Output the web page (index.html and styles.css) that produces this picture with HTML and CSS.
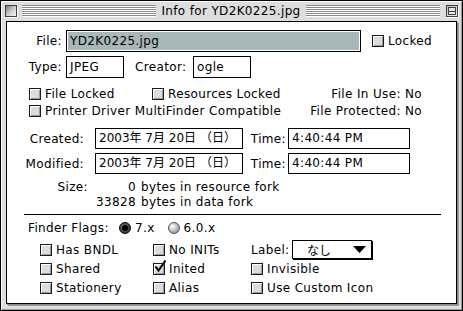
FILE: index.html
```html
<!DOCTYPE html>
<html>
<head>
<meta charset="utf-8">
<link rel="stylesheet" href="styles.css">
</head>
<body>
<div class="window">
  <div class="titlebar">
    <div class="closebox"></div>
    <div class="stripes"></div>
    <div class="title">Info for YD2K0225.jpg</div>
    <div class="stripes"></div>
    <div class="zoombox"><span class="zin"></span></div>
  </div>
  <div class="content">
    <div class="row row-file">
      <span class="lbl w-file">File:</span>
      <div class="field field-file"><span class="sel">YD2K0225.jpg</span></div>
      <span class="cb cb-locked"></span><span class="cbl">Locked</span>
    </div>
    <div class="row row-type">
      <span class="lbl w-file">Type:</span>
      <div class="field field-short">JPEG</div>
      <span class="lbl-creator">Creator:</span>
      <div class="field field-short">ogle</div>
    </div>
    <div class="row row-cb row-cb-a">
      <span class="cell cell-a"><span class="cb"></span><span class="cbl">File Locked</span></span>
      <span class="cell"><span class="cb"></span><span class="cbl">Resources Locked</span></span>
      <span class="status">File In Use: No</span>
    </div>
    <div class="row row-cb row-cb-b">
      <span class="cell"><span class="cb"></span><span class="cbl">Printer Driver MultiFinder Compatible</span></span>
      <span class="status">File Protected: No</span>
    </div>
    <div class="row row-date row-created">
      <span class="lbl w-date">Created:</span>
      <div class="field field-date">2003年 7月 20日 （日）</div>
      <span class="lbl w-time">Time:</span>
      <div class="field field-time">4:40:44 PM</div>
    </div>
    <div class="row row-date row-modified">
      <span class="lbl w-date">Modified:</span>
      <div class="field field-date">2003年 7月 20日 （日）</div>
      <span class="lbl w-time">Time:</span>
      <div class="field field-time">4:40:44 PM</div>
    </div>
    <div class="size">
      <div class="size-line">
        <span class="lbl w-size">Size:</span>
        <span class="num">0</span>
        <span class="desc">bytes in resource fork</span>
      </div>
      <div class="size-line">
        <span class="lbl w-size"></span>
        <span class="num">33828</span>
        <span class="desc">bytes in data fork</span>
      </div>
    </div>
    <div class="sep"></div>
    <div class="row row-flags">
      <span class="lbl-flags">Finder Flags:</span>
      <span class="radio on"><span class="dot"></span></span><span class="rl rl-7">7.x</span>
      <span class="radio"></span><span class="rl">6.0.x</span>
    </div>
    <div class="grid">
      <span class="cell"><span class="cb"></span><span class="cbl">Has BNDL</span></span>
      <span class="cell"><span class="cb"></span><span class="cbl">No INITs</span></span>
      <span class="cell">
        <span class="lbl-label">Label:</span>
        <span class="popup"><span class="popup-text">なし</span><svg class="tri" width="13" height="7" viewBox="0 0 13 7"><polygon points="0,0 13,0 6.5,7" fill="#000"/></svg></span>
      </span>
      <span class="cell"><span class="cb"></span><span class="cbl">Shared</span></span>
      <span class="cell"><span class="cb checked"><svg class="check" width="14" height="14" viewBox="0 0 14 14"><path d="M2.5 6.5 L5.5 10.5 L12.5 0.5" stroke="#000" stroke-width="2" fill="none"/></svg></span><span class="cbl">Inited</span></span>
      <span class="cell"><span class="cb"></span><span class="cbl">Invisible</span></span>
      <span class="cell"><span class="cb"></span><span class="cbl">Stationery</span></span>
      <span class="cell"><span class="cb"></span><span class="cbl">Alias</span></span>
      <span class="cell"><span class="cb"></span><span class="cbl">Use Custom Icon</span></span>
    </div>
  </div>
</div>
</body>
</html>
```
FILE: styles.css
```css
* { box-sizing: border-box; }
html, body { margin: 0; padding: 0; background: #fff; }
body {
  font-family: "DejaVu Sans", "Noto Sans CJK JP", sans-serif;
  font-size: 12px;
  letter-spacing: 0.35px;
  color: #000;
}
.window {
  width: 463px;
  height: 311px;
  border: 1px solid #000;
  background: #dddddd;
  box-shadow: inset 1px 1px 0 #fff, inset -1px -1px 0 #9a9a9a;
}
.titlebar {
  height: 20px;
  display: flex;
  align-items: flex-start;
  padding: 4px 4px 0 4px;
}
.closebox {
  width: 12px;
  height: 12px;
  border: 1px solid #404040;
  background: linear-gradient(135deg, #7a7a7a 0%, #cfcfcf 55%, #f4f4f4 100%);
  box-shadow: 1px 1px 0 #fff;
  margin-right: 5px;
  flex: none;
}
.stripes {
  flex: 1;
  height: 12px;
  background: repeating-linear-gradient(to bottom, #8a8a8a 0 1px, #ffffff 1px 2px);
}
.title {
  padding: 0 5px;
  line-height: 13px;
  white-space: nowrap;
}
.zoombox {
  width: 12px;
  height: 12px;
  margin-left: 6px;
  border: 1px solid #404040;
  background: linear-gradient(135deg, #bdbdbd, #f0f0f0);
  box-shadow: 1px 1px 0 #fff;
  flex: none;
  position: relative;
}
.zin {
  display: block;
  margin: 1px;
  height: 8px;
  border: 1px solid #404040;
  background: linear-gradient(to bottom, #e6e6e6 0 3px, #404040 3px 4px, #e6e6e6 4px);
}
.content {
  margin-left: 5px;
  width: 451px;
  height: 283px;
  border: 1px solid #000;
  background: #fff;
  box-shadow: 1px 1px 0 #8c8c8c, 2px 2px 0 #9a9a9a;
  padding-top: 8px;
}
.row {
  display: flex;
  align-items: center;
  white-space: nowrap;
}
.lbl { text-align: right; flex: none; }
.w-file { width: 55px; margin-right: 4px; }
.field {
  border: 1px solid #000;
  background: #fff;
  height: 22px;
  line-height: 20px;
  padding-left: 3px;
  flex: none;
}
.row-file { height: 22px; }
.field-file { width: 295px; padding: 1px; line-height: 18px; }
.sel {
  display: block;
  height: 18px;
  background: #a8b8b8;
  padding-left: 2px;
}
.cb {
  display: inline-block;
  width: 12px;
  height: 12px;
  border: 1px solid #1c1c1c;
  background: #dcdcdc;
  box-shadow: inset 1px 1px 0 #fff, inset -1px -1px 0 #9a9a9a;
  flex: none;
  position: relative;
  margin-right: 4px;
}
.cb-locked { margin-left: 11px; }
.cbl { line-height: 16px; }
.row-type { height: 22px; margin-top: 4px; }
.field-short { width: 58px; }
.lbl-creator { margin-left: 11px; width: 58px; }
.row-cb { height: 16px; padding-left: 22px; padding-right: 34px; }
.row-cb-a { margin-top: 8px; }
.row-cb-b { margin-top: 1px; }
.cell { display: flex; align-items: center; }
.cell-a { width: 123px; }
.status { margin-left: auto; }
.row-date { height: 21px; }
.row-created { margin-top: 9px; }
.row-modified { margin-top: 4px; }
.row-date .field { height: 21px; line-height: 19px; }
.w-date { width: 77px; margin-right: 11px; }
.field-date { width: 148px; letter-spacing: 0; }
.w-time { width: 43px; margin-right: 2px; }
.field-time { width: 122px; }
.size { margin-top: 6px; }
.size-line { display: flex; height: 15px; line-height: 15px; white-space: nowrap; }
.w-size { width: 81px; }
.num { width: 48px; text-align: right; flex: none; }
.desc { margin-left: 5px; }
.sep {
  margin: 4px 0 0 17px;
  width: 417px;
  height: 1px;
  background: #000;
}
.row-flags { height: 16px; margin-top: 5px; padding-left: 21px; }
.lbl-flags { width: 91px; }
.radio {
  display: inline-block;
  width: 12px;
  height: 12px;
  border-radius: 50%;
  border: 1px solid #555;
  background: radial-gradient(circle at 35% 35%, #ffffff 0, #e0e0e0 25%, #a0a0a0 70%, #777 100%);
  margin-right: 4px;
  flex: none;
  position: relative;
}
.radio.on {
  border: 1px solid #000;
  background: radial-gradient(circle at 40% 40%, #777 0, #444 60%, #222 100%);
}
.dot {
  position: absolute;
  left: 2px;
  top: 2px;
  width: 6px;
  height: 6px;
  border-radius: 50%;
  background: #000;
}
.rl-7 { margin-right: 13px; }
.grid {
  margin-top: 4px;
  padding-left: 33px;
  display: grid;
  grid-template-columns: 113px 98px 1fr;
  grid-auto-rows: 19px;
  white-space: nowrap;
}
.grid .cell { height: 19px; }
.lbl-label { width: 41px; }
.popup {
  display: flex;
  align-items: center;
  width: 80px;
  height: 19px;
  border: 1px solid #000;
  box-shadow: 1px 1px 0 #000;
  background: #fff;
  padding-left: 14px;
  position: relative;
}
.popup-text { font-family: "Noto Sans CJK JP", sans-serif; font-size: 12px; line-height: 17px; flex: 1; letter-spacing: 0; }
.tri { margin-right: 5px; }
.check {
  position: absolute;
  left: -1px;
  top: -4px;
}
```
